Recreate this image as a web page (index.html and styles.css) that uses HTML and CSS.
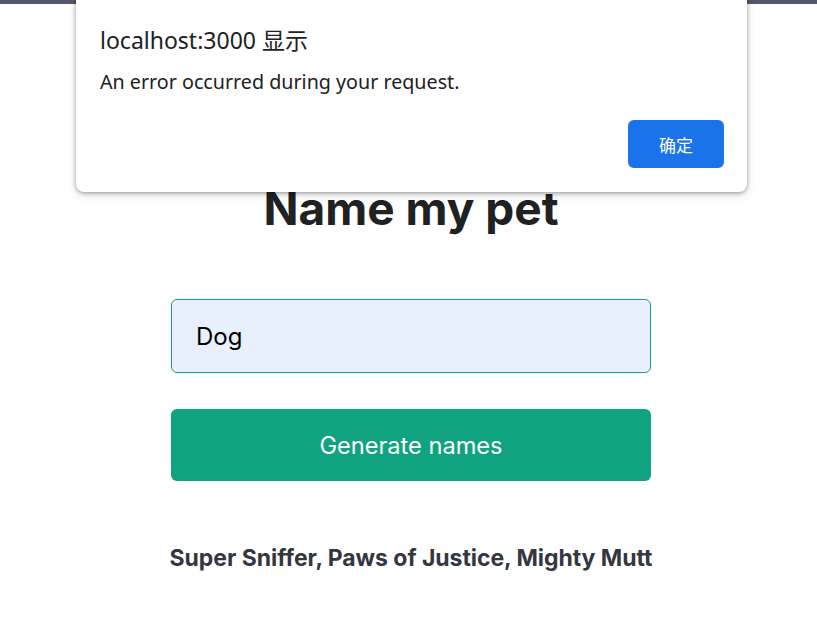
FILE: index.html
```html
<!DOCTYPE html>
<html lang="en">
<head>
<meta charset="utf-8">
<title>OpenAI Quickstart</title>
<link rel="stylesheet" href="styles.css">
</head>
<body>
<div class="topbar"></div>
<main class="main">
  <h3 class="title">Name my pet</h3>
  <form class="form">
    <div class="input">Dog</div>
    <div class="submit">Generate names</div>
  </form>
  <div class="result">Super Sniffer, Paws of Justice, Mighty Mutt</div>
</main>
<div class="dialog">
  <div class="dialog-title">localhost:3000 显示</div>
  <div class="dialog-msg">An error occurred during your request.</div>
  <div class="dialog-actions">
    <div class="dialog-btn">确定</div>
  </div>
</div>
</body>
</html>
```

FILE: styles.css
```css
html, body {
  margin: 0;
  padding: 0;
  background: #ffffff;
}
body {
  font-family: Inter, "Noto Sans", sans-serif;
  width: 817px;
  height: 643px;
  position: relative;
  overflow: hidden;
}
.topbar {
  height: 4px;
  background: #55576b;
}
.main {
  display: flex;
  flex-direction: column;
  align-items: center;
  padding-top: 175px;
  padding-left: 5px;
}
.title {
  font-size: 46px;
  line-height: 58px;
  font-weight: 700;
  color: #202123;
  margin: 0 0 62px;
}
.form {
  display: flex;
  flex-direction: column;
  width: 480px;
}
.input {
  box-sizing: border-box;
  height: 74px;
  padding: 0 24px;
  display: flex;
  align-items: center;
  border: 1px solid #10a37f;
  border-radius: 6px;
  background: #e8f0fe;
  font-size: 24px;
  color: #000000;
  margin-bottom: 36px;
}
.submit {
  height: 72px;
  display: flex;
  align-items: center;
  justify-content: center;
  background: #10a37f;
  color: #ffffff;
  border-radius: 6px;
  font-size: 23.6px;
}
.result {
  margin-top: 60px;
  font-size: 23px;
  line-height: 34px;
  font-weight: 700;
  color: #353740;
  letter-spacing: -0.05px;
}
.dialog {
  position: absolute;
  left: 76px;
  top: -10px;
  width: 671px;
  height: 202px;
  box-sizing: border-box;
  background: #ffffff;
  border-radius: 8px;
  box-shadow: 0 1px 4px rgba(0,0,0,0.35), 0 3px 10px rgba(0,0,0,0.12);
  padding: 35px 23px 0 24px;
  font-family: "Noto Sans", "Noto Sans CJK SC", sans-serif;
  color: #202124;
}
.dialog-title {
  font-size: 23px;
  line-height: 30px;
}
.dialog-msg {
  font-size: 19.7px;
  line-height: 28px;
  margin-top: 13px;
}
.dialog-actions {
  display: flex;
  justify-content: flex-end;
  margin-top: 24px;
}
.dialog-btn {
  width: 96px;
  height: 48px;
  display: flex;
  align-items: center;
  justify-content: center;
  background: #1a73e8;
  color: #ffffff;
  border-radius: 6px;
  font-size: 17px;
  font-family: "Noto Sans CJK SC", sans-serif;
}
```
